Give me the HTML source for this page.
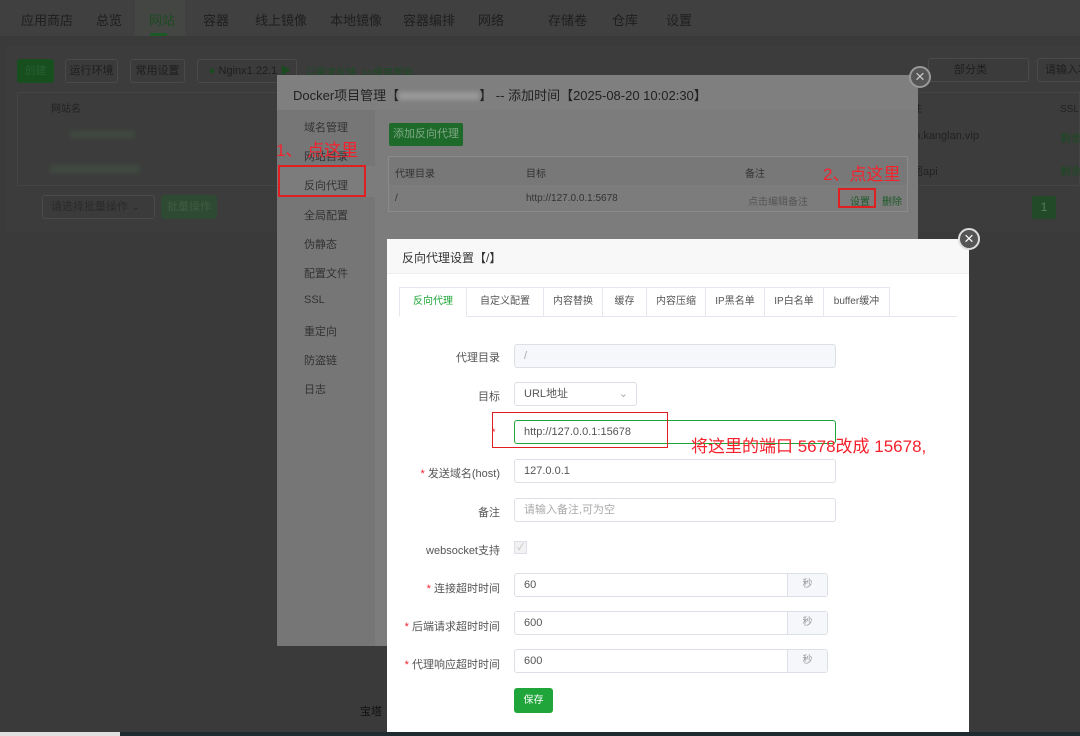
<!DOCTYPE html>
<html style="background:#3a3a3a"><head><meta charset="utf-8"><style>
*{margin:0;padding:0;box-sizing:border-box}
html,body{background:#3a3a3a}
body{width:1080px;height:736px;overflow:hidden;font-family:"Liberation Sans","Noto Sans CJK SC",sans-serif;font-size:12px;position:relative;color:#333}
.a{position:absolute;white-space:nowrap}
.nav{left:0;top:0;width:1080px;height:36px;background:#404040}
.nav span{position:absolute;top:10px;font-size:13px;color:#1e1e1e}
.btn{position:absolute;border:1px solid #4a4a4a;border-radius:3px;background:#3b3b3b;color:#1e1e1e;font-size:11px;text-align:center;line-height:22px;height:24px;white-space:nowrap;overflow:hidden}
.g{color:#1a4a1f}
.side div{position:absolute;left:27px;font-size:11px;color:#333}
.lbl{position:absolute;text-align:right;width:120px;font-size:11px;color:#555;white-space:nowrap}
.inp{position:absolute;border:1px solid #dcdfe6;border-radius:3px;height:24px;font-size:11px;color:#555;padding-left:9px;line-height:22px;background:#fff}
.red{color:#f5222d}
.tab{position:absolute;top:287px;height:30px;border:1px solid #e4e7ed;border-left:none;font-size:10px;color:#555;text-align:center;line-height:28px;background:#fff}
.sec{position:absolute;right:0;top:0;width:40px;height:22px;background:#f5f7fa;border-left:1px solid #dcdfe6;color:#999;text-align:center;font-size:10px}
</style></head><body>
<div class="a" style="left:0;top:0;width:1080px;height:736px;background:#3a3a3a"></div>
<div class="a nav">
<span style="left:21px">应用商店</span><span style="left:96px">总览</span>
<div class="a" style="left:135px;top:0;width:50px;height:36px;background:#444644"></div>
<span style="left:149px;color:#1b4a22">网站</span><div class="a" style="left:150px;top:33px;width:17px;height:3px;background:#1b5a26"></div>
<span style="left:203px">容器</span><span style="left:255px">线上镜像</span><span style="left:330px">本地镜像</span><span style="left:403px">容器编排</span><span style="left:478px">网络</span><span style="left:548px">存储卷</span><span style="left:612px">仓库</span><span style="left:666px">设置</span>
</div>
<div class="a" style="left:5px;top:46px;width:1075px;height:186px;background:#3c3c3c"></div>
<div class="btn" style="left:17px;top:59px;width:37px;background:#174f1f;border-color:#174f1f;color:#2b5d33">创建</div>
<div class="btn" style="left:65px;top:59px;width:53px">运行环境</div>
<div class="btn" style="left:130px;top:59px;width:55px">常用设置</div>
<div class="btn" style="left:197px;top:59px;width:100px">&nbsp;&nbsp;<span class="g">●</span> Nginx1.22.1 <span class="g">▶</span></div>
<div class="a" style="left:306px;top:64px;font-size:10px;color:#1b4a22">▤需求反馈 &nbsp;&gt;&gt;使用帮助</div>
<div class="a" style="left:17px;top:92px;width:1063px;height:94px;border:1px solid #444"></div>
<div class="a" style="left:51px;top:100px;font-size:10px;color:#222">网站名</div>
<div class="a" style="left:70px;top:131px;width:65px;height:7px;background:#3f4a40;filter:blur(2px)"></div>
<div class="a" style="left:50px;top:165px;width:90px;height:8px;background:#3f4a40;filter:blur(2px)"></div>
<div class="btn" style="left:42px;top:195px;width:113px;text-align:left;padding-left:8px;color:#2a2a2a">请选择批量操作 ⌄</div>
<div class="btn" style="left:161px;top:195px;width:56px;background:#2f4a33;border-color:#2f4a33;color:#3d5e41">批量操作</div>
<div class="btn" style="left:928px;top:58px;width:101px;text-align:left;padding-left:25px">部分类</div>
<div class="btn" style="left:1037px;top:58px;width:50px;text-align:left;padding-left:7px">请输入项</div>
<div class="a" style="left:912px;top:100px;font-size:10px;color:#222">注</div><div class="a" style="left:1060px;top:100px;font-size:10px;color:#222">SSL证</div>
<div class="a" style="left:908px;top:130px;font-size:11px;color:#222">3n.kanglan.vip</div><div class="a" style="left:1060px;top:130px;font-size:11px;color:#1b4a22">剩余</div>
<div class="a" style="left:912px;top:163px;font-size:11px;color:#222">图api</div><div class="a" style="left:1060px;top:163px;font-size:11px;color:#1b4a22">剩余</div>
<div class="a" style="left:1032px;top:196px;width:24px;height:23px;background:#234a28;color:#5a7a5e;text-align:center;line-height:23px;border-radius:2px">1</div>
<div class="a" style="left:360px;top:703px;font-size:11px;color:#111">宝塔</div>
<!-- modal 1 -->
<div class="a" style="left:277px;top:75px;width:641px;height:571px;background:#7c7c7c"></div>
<div class="a" style="left:277px;top:75px;width:641px;height:35px;background:#7f7f7f;font-size:13px;color:#222;padding:10px 0 0 16px">Docker项目管理【<span style="display:inline-block;width:80px;height:8px;background:#999;filter:blur(2px)"></span>】 -- 添加时间【2025-08-20 10:02:30】</div>
<div class="a side" style="left:277px;top:110px;width:98px;height:536px;background:#767676">
<div style="top:9px">域名管理</div><div style="top:38px">网站目录</div>
<div style="left:0;top:56px;width:98px;height:31px;background:#7c7c7c"></div><div style="top:67px">反向代理</div>
<div style="top:97px">全局配置</div><div style="top:126px">伪静态</div><div style="top:155px">配置文件</div><div style="top:184px">SSL</div><div style="top:213px">重定向</div><div style="top:242px">防盗链</div><div style="top:271px">日志</div>
</div>
<div class="a" style="left:278px;top:165px;width:88px;height:32px;border:2px solid #e02020"></div>
<div class="a red" style="left:276px;top:136px;font-size:17px">1、 点这里</div>
<div class="a" style="left:389px;top:123px;width:74px;height:23px;background:#1d6a2a;color:#7fa885;font-size:11px;text-align:center;line-height:23px;border-radius:2px">添加反向代理</div>
<div class="a" style="left:388px;top:156px;width:520px;height:56px;border:1px solid #8a8a8a"></div>
<div class="a" style="left:389px;top:157px;width:518px;height:28px;background:#787878"></div>
<div class="a" style="left:395px;top:165px;font-size:10px;color:#333">代理目录</div><div class="a" style="left:526px;top:165px;font-size:10px;color:#333">目标</div><div class="a" style="left:745px;top:165px;font-size:10px;color:#333">备注</div>
<div class="a" style="left:395px;top:193px;font-size:10px;color:#333">/</div><div class="a" style="left:526px;top:193px;font-size:10px;color:#333">http://127.0.0.1:5678</div><div class="a" style="left:748px;top:193px;font-size:10px;color:#555">点击编辑备注</div>
<div class="a" style="left:850px;top:193px;font-size:10px;color:#1b5a26">设置</div><div class="a" style="left:882px;top:193px;font-size:10px;color:#1b5a26">删除</div>
<div class="a" style="left:838px;top:188px;width:38px;height:20px;border:2px solid #e02020"></div>
<div class="a red" style="left:823px;top:160px;font-size:17px">2、点这里</div>
<div class="a" style="left:909px;top:66px;width:22px;height:22px;border-radius:50%;background:#555;border:2px solid #999;color:#ccc;text-align:center;line-height:17px;font-size:17px">×</div>
<!-- modal 2 -->
<div class="a" style="left:387px;top:239px;width:582px;height:494px;background:#fff"></div>
<div class="a" style="left:387px;top:239px;width:582px;height:35px;background:#f8f8f8;border-bottom:1px solid #eee;font-size:12px;color:#333;padding:10px 0 0 15px">反向代理设置【/】</div>
<div class="a" style="left:958px;top:228px;width:22px;height:22px;border-radius:50%;background:#555;border:2px solid #ddd;color:#fff;text-align:center;line-height:17px;font-size:17px">×</div>
<div class="a" style="left:399px;top:316px;width:558px;height:1px;background:#e4e7ed"></div>
<div class="tab" style="left:399px;width:68px;border-left:1px solid #e4e7ed;border-bottom-color:#fff;color:#20a53a">反向代理</div>
<div class="tab" style="left:467px;width:77px">自定义配置</div>
<div class="tab" style="left:544px;width:59px">内容替换</div>
<div class="tab" style="left:603px;width:44px">缓存</div>
<div class="tab" style="left:647px;width:59px">内容压缩</div>
<div class="tab" style="left:706px;width:59px">IP黑名单</div>
<div class="tab" style="left:765px;width:59px">IP白名单</div>
<div class="tab" style="left:824px;width:66px">buffer缓冲</div>
<div class="lbl" style="left:380px;top:349px">代理目录</div><div class="inp" style="left:514px;top:344px;width:322px;background:#f5f7fa;color:#aaa">/</div>
<div class="lbl" style="left:380px;top:388px">目标</div><div class="inp" style="left:514px;top:382px;width:123px">URL地址<span style="float:right;margin-right:8px;color:#aaa">⌄</span></div>
<div class="a red" style="left:492px;top:427px;font-size:9px">*</div>
<div class="inp" style="left:514px;top:420px;width:322px;border-color:#20a53a">http://127.0.0.1:15678</div>
<div class="a" style="left:492px;top:412px;width:176px;height:36px;border:1.5px solid #e02020"></div>
<div class="a red" style="left:691px;top:432px;font-size:17px">将这里的端口 5678改成 15678,</div>
<div class="lbl" style="left:380px;top:465px"><span class="red">* </span>发送域名(host)</div><div class="inp" style="left:514px;top:459px;width:322px">127.0.0.1</div>
<div class="lbl" style="left:380px;top:504px">备注</div><div class="inp" style="left:514px;top:498px;width:322px;color:#aaa">请输入备注,可为空</div>
<div class="lbl" style="left:380px;top:542px">websocket支持</div><div class="a" style="left:514px;top:541px;width:13px;height:13px;border:1px solid #dcdfe6;background:#f2f2f2;color:#bbb;font-size:9px;text-align:center;line-height:11px">✓</div>
<div class="lbl" style="left:380px;top:580px"><span class="red">* </span>连接超时时间</div><div class="inp" style="left:514px;top:573px;width:314px">60<div class="sec">秒</div></div>
<div class="lbl" style="left:380px;top:618px"><span class="red">* </span>后端请求超时时间</div><div class="inp" style="left:514px;top:611px;width:314px">600<div class="sec">秒</div></div>
<div class="lbl" style="left:380px;top:656px"><span class="red">* </span>代理响应超时时间</div><div class="inp" style="left:514px;top:649px;width:314px">600<div class="sec">秒</div></div>
<div class="a" style="left:514px;top:688px;width:39px;height:25px;background:#20a53a;color:#fff;border-radius:3px;font-size:10px;text-align:center;line-height:25px">保存</div>
<div class="a" style="left:0;top:732px;width:120px;height:4px;background:#e0e0e0"></div>
<div class="a" style="left:120px;top:732px;width:960px;height:4px;background:#1e2b30"></div>
</body></html>
